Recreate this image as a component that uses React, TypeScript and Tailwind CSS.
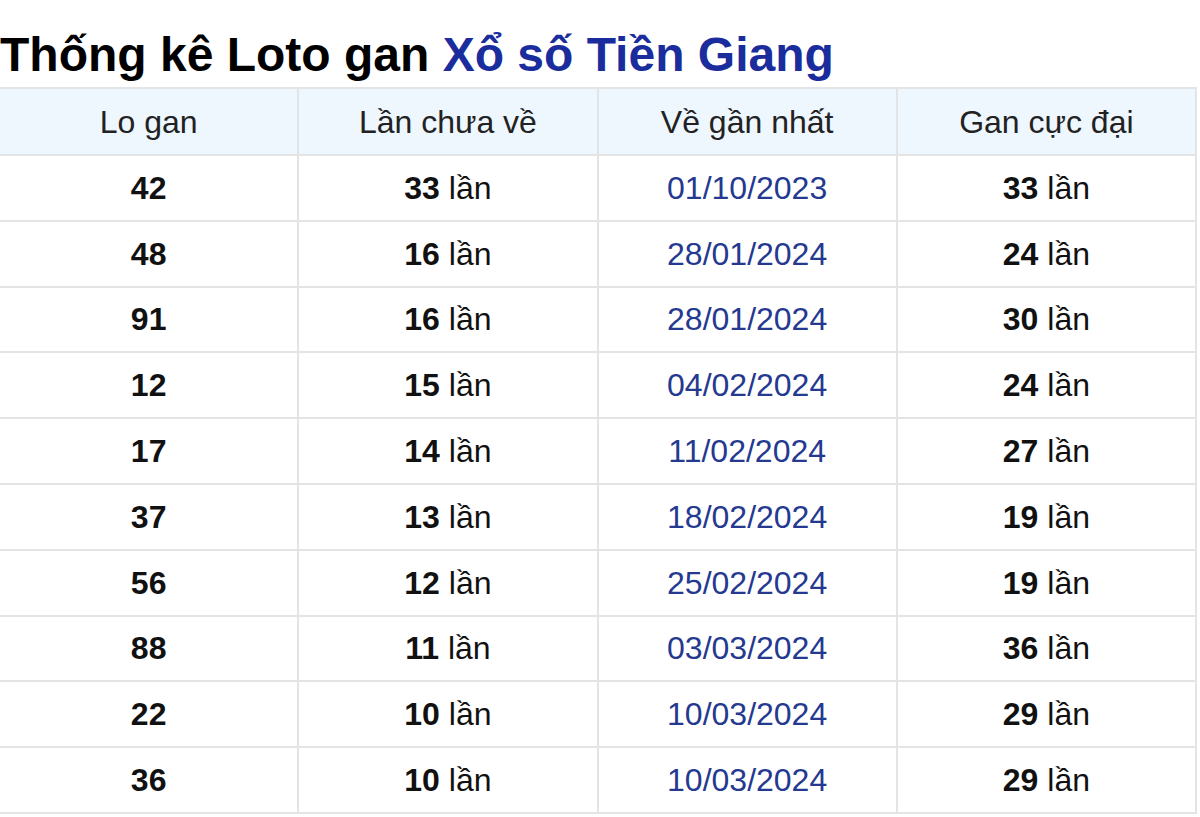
import React from "react";

const rows: [string, string, string, string][] = [
  ["42", "33", "01/10/2023", "33"],
  ["48", "16", "28/01/2024", "24"],
  ["91", "16", "28/01/2024", "30"],
  ["12", "15", "04/02/2024", "24"],
  ["17", "14", "11/02/2024", "27"],
  ["37", "13", "18/02/2024", "19"],
  ["56", "12", "25/02/2024", "19"],
  ["88", "11", "03/03/2024", "36"],
  ["22", "10", "10/03/2024", "29"],
  ["36", "10", "10/03/2024", "29"],
];

export default function App() {
  return (
    <div
      className="w-[1200px] h-[817px] overflow-hidden bg-white"
      style={{ fontFamily: '"Liberation Sans", Arial, sans-serif' }}
    >
      <h1 className="pt-[30px] h-[87px] text-[48px] leading-[50px] font-bold text-black whitespace-nowrap">
        Thống kê Loto gan <span className="text-[#1b2d9c]">Xổ số Tiền Giang</span>
      </h1>
      <table className="-ml-[2px] w-[1199px] border-collapse table-fixed text-[32px] text-[#111]">
        <thead>
          <tr className="bg-[#eef6fe] h-[67px]">
            {["Lo gan", "Lần chưa về", "Về gần nhất", "Gan cực đại"].map((h) => (
              <th key={h} className="border-2 border-[#e2e4e6] font-normal text-center text-[#222]">
                {h}
              </th>
            ))}
          </tr>
        </thead>
        <tbody>
          {rows.map((r, i) => (
            <tr key={i} className="h-[65.8px]">
              <td className="border-2 border-[#e2e4e6] text-center font-bold">{r[0]}</td>
              <td className="border-2 border-[#e2e4e6] text-center">
                <b>{r[1]}</b> lần
              </td>
              <td className="border-2 border-[#e2e4e6] text-center text-[#24398f]">{r[2]}</td>
              <td className="border-2 border-[#e2e4e6] text-center">
                <b>{r[3]}</b> lần
              </td>
            </tr>
          ))}
        </tbody>
      </table>
    </div>
  );
}
